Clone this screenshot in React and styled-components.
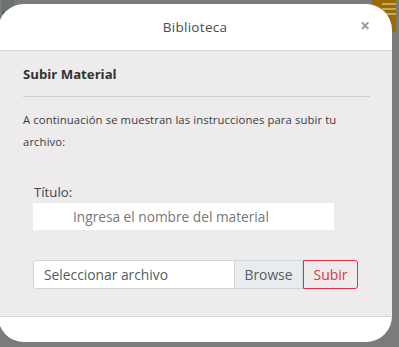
import styled, { createGlobalStyle } from "styled-components";

const Global = createGlobalStyle`
  html, body {
    margin: 0;
    padding: 0;
    background: #7b7b7b;
    overflow: hidden;
  }
  * { box-sizing: border-box; }
`;

const Backdrop = styled.div`
  position: relative;
  width: 399px;
  height: 347px;
  background: #7b7b7b;
  overflow: hidden;
  font-family: "Open Sans", "DejaVu Sans", sans-serif;
`;

const MenuCorner = styled.div`
  position: absolute;
  top: 0;
  right: 3px;
  width: 24px;
  height: 32px;
  background: #9a6a05;
  display: flex;
  flex-direction: column;
  align-items: flex-end;
  gap: 3px;
  padding: 3px 0 0 0;
`;

const MenuLine = styled.span`
  display: block;
  width: 14px;
  height: 2px;
  background: #c8a860;
`;

const DocCorner = styled.div`
  position: absolute;
  top: 0;
  left: 2px;
  width: 12px;
  height: 14px;
  background: #6d7270;
  border-bottom: 3px solid #3f7a3a;
`;

const Modal = styled.div`
  position: absolute;
  top: 4px;
  left: -2px;
  width: 394px;
  height: 338px;
  background: #fff;
  border-radius: 26px;
  overflow: hidden;
  display: flex;
  flex-direction: column;
`;

const Header = styled.div`
  height: 47px;
  flex-shrink: 0;
  border-bottom: 1px solid #d6d4d5;
  display: flex;
  align-items: center;
  justify-content: center;
  position: relative;
`;

const Title = styled.h5`
  margin: 0;
  font-weight: 400;
  font-size: 13.5px;
  color: #4a4a4a;
  letter-spacing: 0.3px;
`;

const Close = styled.span`
  position: absolute;
  right: 22px;
  top: 13px;
  font-size: 17px;
  font-weight: 700;
  color: #9a9a9a;
  line-height: 1;
`;

const Body = styled.div`
  height: 266px;
  flex-shrink: 0;
  background: #edebec;
  border-bottom: 1px solid #d6d4d5;
  padding: 14px 22px 0 25px;
`;

const SectionTitle = styled.h6`
  margin: 0;
  font-size: 13.2px;
  font-weight: 700;
  color: #333;
  line-height: 18px;
`;

const Rule = styled.hr`
  margin: 13px 0 12px;
  border: 0;
  border-top: 1px solid #cfcdce;
`;

const Text = styled.p`
  margin: 0;
  font-size: 11.3px;
  line-height: 22px;
  color: #3a3a3a;
  letter-spacing: 0.1px;
`;

const Field = styled.div`
  margin: 31px 0 0 10px;
  width: 301px;
`;

const Label = styled.label`
  display: block;
  font-size: 13.2px;
  color: #444;
  line-height: 16px;
  margin-bottom: 3px;
  padding-left: 1px;
`;

const TitleInput = styled.input`
  display: block;
  width: 100%;
  height: 27px;
  border: 0;
  background: #fff;
  padding: 0 0 0 40px;
  font-family: inherit;
  font-size: 13.7px;
  color: #333;
  &::placeholder { color: #777; }
`;

const UploadRow = styled.div`
  display: flex;
  margin: 30px 0 0 10px;
  width: 325px;
  height: 29px;
`;

const FileBox = styled.div`
  display: flex;
  flex: 1;
  border: 1px solid #cfd4da;
  border-radius: 3px 0 0 3px;
  overflow: hidden;
`;

const FileName = styled.span`
  flex: 1;
  background: #fff;
  display: flex;
  align-items: center;
  padding-left: 10px;
  font-size: 13.8px;
  color: #555b63;
`;

const Browse = styled.span`
  width: 68px;
  background: #e9ecef;
  border-left: 1px solid #cfd4da;
  display: flex;
  align-items: center;
  justify-content: center;
  font-size: 13.8px;
  color: #555b63;
`;

const Submit = styled.button`
  width: 55px;
  border: 1px solid #dc3545;
  border-radius: 0 3px 3px 0;
  background: transparent;
  color: #dc3545;
  font-family: inherit;
  font-size: 14px;
  padding: 0;
`;

export default function App() {
  return (
    <>
      <Global />
      <Backdrop>
        <DocCorner />
        <MenuCorner>
          <MenuLine />
          <MenuLine />
          <MenuLine />
        </MenuCorner>
        <Modal>
          <Header>
            <Title>Biblioteca</Title>
            <Close>×</Close>
          </Header>
          <Body>
            <SectionTitle>Subir Material</SectionTitle>
            <Rule />
            <Text>
              A continuación se muestran las instrucciones para subir tu
              archivo:
            </Text>
            <Field>
              <Label>Título:</Label>
              <TitleInput placeholder="Ingresa el nombre del material" />
            </Field>
            <UploadRow>
              <FileBox>
                <FileName>Seleccionar archivo</FileName>
                <Browse>Browse</Browse>
              </FileBox>
              <Submit>Subir</Submit>
            </UploadRow>
          </Body>
        </Modal>
      </Backdrop>
    </>
  );
}
